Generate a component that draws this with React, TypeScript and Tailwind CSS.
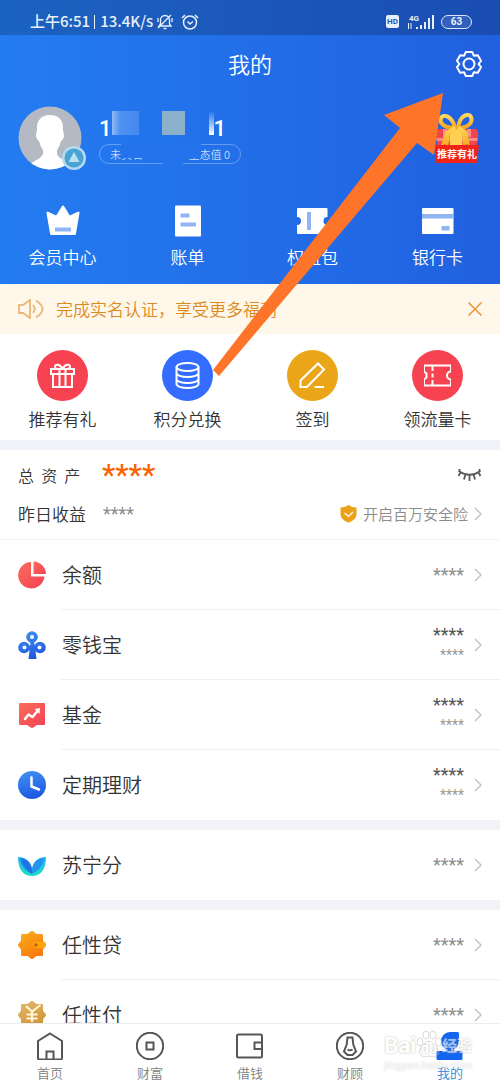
import type { ReactNode } from "react";

const CrownIcon = () => (
  <svg width="34" height="32" viewBox="0 0 34 32">
    <path
      d="M17 0.5c.6 0 1 .4 1.3 1l5 8.2c.4.6 1 .7 1.6.3l7-3.2c1-.4 1.9.2 1.6 1.200L30 28.500c-.2 1-.8 1.500-1.800 1.500H5.800c-1 0-1.600-.5-1.800-1.500L.5 8c-.3-1 .6-1.600 1.600-1.200l7 3.200c.6.4 1.200.3 1.600-.3l5-8.200c.300-.600.700-1 1.300-1z"
      fill="#fff"
    />
    <path d="M9 22.500h16v4H9z" fill="#91b5f3" />
  </svg>
);

const BillIcon = () => (
  <svg width="34" height="32" viewBox="0 0 34 32">
    <rect x="4" y="0.500" width="26" height="31" rx="1" fill="#fff" />
    <path d="M9.500 8.500h9v4h-9zM9.500 17.500H25v4H9.500z" fill="#91b5f3" />
  </svg>
);

const CouponIcon = () => (
  <svg width="34" height="32" viewBox="0 0 34 32">
    <path
      d="M2 3h28.500a1 1 0 0 1 1 1v8a4 4 0 0 0 0 8v8a1 1 0 0 1-1 1H2a1 1 0 0 1-1-1v-8a4 4 0 0 0 0-8V4a1 1 0 0 1 1-1z"
      fill="#fff"
    />
    <path d="M11 7h4v18h-4z" fill="#91b5f3" />
  </svg>
);

const CardIcon = () => (
  <svg width="34" height="32" viewBox="0 0 34 32">
    <rect x="1" y="3" width="31.500" height="26" rx="1" fill="#fff" />
    <path d="M1 9h31.500v4.500H1zM20.500 21h8v4.500h-8z" fill="#91b5f3" />
  </svg>
);

const shortcuts = [
  { label: "会员中心", icon: <CrownIcon /> },
  { label: "账单", icon: <BillIcon /> },
  { label: "权益包", icon: <CouponIcon /> },
  { label: "银行卡", icon: <CardIcon /> },
];

const actions = [
  {
    label: "推荐有礼",
    circle: "bg-[#f74351]",
    icon: (
      <>
        <path d="M2 7h23v5H2zM4 12h19v13H4zM10.500 7v18M16.500 7v18" />
        <path d="M13.500 7C11 2 6.500 1.500 6 4.500c0 1.500 1 2.500 2.500 2.500M13.500 7c2.500-5 7-5.500 7.500-2.500 0 1.500-1 2.500-2.500 2.500" />
      </>
    ),
  },
  {
    label: "积分兑换",
    circle: "bg-[#336cff]",
    icon: (
      <>
        <ellipse cx="13.500" cy="5" rx="11" ry="4" />
        <path d="M2.500 5v17c0 2.200 5 4 11 4s11-1.800 11-4V5M2.500 11c0 2.200 5 4 11 4s11-1.800 11-4M2.500 17c0 2.200 5 4 11 4s11-1.800 11-4" />
      </>
    ),
  },
  {
    label: "签到",
    circle: "bg-[#eba518]",
    icon: <path d="M19 1.500l6 6L8 25H1.500v-6.500zM15.500 25H25" />,
  },
  {
    label: "领流量卡",
    circle: "bg-[#f74351]",
    icon: (
      <path d="M0 3.500h27v6a4 4 0 0 0 0 8v6H0v-6l2.500-2v-4L0 9.500zM8.500 4v5M8.500 11.500v4M8.500 18v5" />
    ),
  },
];

const Gradients = () => (
  <svg width="0" height="0" className="absolute" aria-hidden="true">
    <defs>
      <linearGradient id="red" x1="0" y1="0" x2="1" y2="1">
        <stop offset="0" stopColor="#fa6e5c" />
        <stop offset="1" stopColor="#f63f54" />
      </linearGradient>
      <linearGradient id="blue" gradientUnits="userSpaceOnUse" x1="10" y1="0" x2="18" y2="28">
        <stop offset="0" stopColor="#3f8ff2" />
        <stop offset="1" stopColor="#1c55df" />
      </linearGradient>
      <linearGradient id="orange" x1="0" y1="0" x2="0.600" y2="1">
        <stop offset="0" stopColor="#fbb01c" />
        <stop offset="1" stopColor="#f9780d" />
      </linearGradient>
      <linearGradient id="gold" x1="0" y1="0" x2="0.500" y2="1">
        <stop offset="0" stopColor="#e3b96b" />
        <stop offset="1" stopColor="#cf9437" />
      </linearGradient>
      <linearGradient id="leaf" x1="0" y1="0" x2="0" y2="1">
        <stop offset="0" stopColor="#21b4f5" />
        <stop offset="1" stopColor="#1ee0bd" />
      </linearGradient>
      <linearGradient id="ribbon" x1="0" y1="0" x2="0" y2="1">
        <stop offset="0" stopColor="#ffd95e" />
        <stop offset="1" stopColor="#f7a51f" />
      </linearGradient>
    </defs>
  </svg>
);

const BADGE =
  "M14 0c1.500 0 3 2.300 4.500 3H23.500c1 0 1.500.5 1.500 1.500V9.500c.700 1.500 3 3 3 4.500s-2.300 3-3 4.500v5c0 1-.5 1.500-1.500 1.500H18.500c-1.500.700-3 3-4.500 3s-3-2.300-4.500-3H4.500C3.500 25 3 24.500 3 23.500V18.500C2.300 17 0 15.500 0 14s2.300-3 3-4.500v-5C3 3.500 3.500 3 4.500 3h5C11 2.300 12.500 0 14 0z";

type Asset = { name: string; icon: ReactNode; sub?: boolean };

const groups: Asset[][] = [
  [
    {
      name: "余额",
      icon: (
        <>
          <path d="M13 1v14.500h13.500A13.200 13.200 0 1 1 13 1z" fill="url(#red)" />
          <path d="M15.500.5A13 13 0 0 1 28 13H15.500z" fill="url(#red)" />
        </>
      ),
    },
    {
      name: "零钱宝",
      sub: true,
      icon: (
        <>
          <g fill="url(#blue)">
            <circle cx="14" cy="6" r="5.800" />
            <circle cx="6" cy="16.500" r="5.800" />
            <circle cx="22" cy="16.500" r="5.800" />
            <path d="M12 10h4l.5 4 3 2-2 4 1 8h-8l1-8-2-4 3-2z" />
          </g>
          <circle cx="14" cy="6" r="2" fill="#fff" />
          <circle cx="6.500" cy="16.500" r="2" fill="#fff" />
          <circle cx="21.500" cy="16.500" r="2" fill="#fff" />
        </>
      ),
    },
    {
      name: "基金",
      sub: true,
      icon: (
        <>
          <path
            d="M2 2h24q1 0 1 1v20q0 1-1 1h-7l-4.300 2.700q-.7.400-1.400 0L9 24H2q-1 0-1-1V3q0-1 1-1z"
            fill="url(#red)"
          />
          <path
            d="M7 18l3.500-4.500 4 2.500 5-6"
            fill="none"
            stroke="#fff"
            strokeWidth="2.500"
            strokeLinecap="round"
            strokeLinejoin="round"
          />
          <path d="M16.500 8l5.500-1-.5 6z" fill="#fff" />
        </>
      ),
    },
    {
      name: "定期理财",
      sub: true,
      icon: (
        <>
          <circle cx="14" cy="14" r="14" fill="url(#blue)" />
          <path
            d="M13.500 6.500V15.500l7.500 3"
            fill="none"
            stroke="#fff"
            strokeWidth="2.500"
            strokeLinecap="round"
            strokeLinejoin="round"
          />
        </>
      ),
    },
  ],
  [
    {
      name: "苏宁分",
      icon: (
        <>
          <path d="M14 25C5 25 0 18 0 6c7 0 13 4 14 13 1-9 7-13 14-13 0 12-5 19-14 19z" fill="url(#leaf)" />
          <path d="M14 23C8 20 3 15 2 7c7 0 12 5 12 13z" fill="#1b86e8" />
          <path d="M14 23C20 20 25 15 26 7c-7 0-12 5-12 13z" fill="#2392f0" />
          <path d="M14 23C9 19 5 14 4 8c6 1 10 6 10 12z" fill="#2270e6" />
        </>
      ),
    },
  ],
  [
    {
      name: "任性贷",
      icon: (
        <>
          <path d={BADGE} fill="url(#orange)" />
          <path d="M17.500 11H27l1 3-2 3h-8.500a3 3 0 0 1 0-6z" fill="#fba70f" />
          <circle cx="18" cy="14" r="1.800" fill="#d9570a" />
        </>
      ),
    },
    {
      name: "任性付",
      icon: (
        <>
          <path d={BADGE} fill="url(#gold)" />
          <path
            d="M8 5l6 5.500L22.500 4M14 11v10M8.500 13.500h11M8.500 17.500h11"
            fill="none"
            stroke="#fff6d8"
            strokeWidth="2.200"
          />
        </>
      ),
    },
  ],
];

const tabs = [
  {
    label: "首页",
    icon: <path d="M14 1.500l12 7.500v17q0 1.500-1.500 1.500h-21Q2 27.500 2 26V9zM10.500 27.500v-8h7v8" />,
  },
  {
    label: "财富",
    icon: (
      <>
        <circle cx="14" cy="14" r="13.200" />
        <path d="M10.500 10.500h7v7h-7z" />
      </>
    ),
  },
  {
    label: "借钱",
    icon: (
      <path d="M2.500 2.500h22q1.500 0 1.500 1.500v20q0 1.500-1.500 1.500h-22Q1 25.500 1 24V4q0-1.500 1.500-1.500zM26 10.500h-7.500v6.500H26" />
    ),
  },
  {
    label: "财顾",
    icon: (
      <>
        <circle cx="14" cy="14" r="13.200" />
        <path d="M11.500 5.500h5l.8 7 2.700 7-3.500 3.500h-5L8 19.500l2.700-7zM11.500 17.500q2.500 1.500 5 0" />
      </>
    ),
  },
];

const Chevron = () => (
  <svg width="8" height="14" viewBox="0 0 8 14" fill="none" stroke="#c4c4c4" strokeWidth="1.500">
    <path d="M1 1l6 6-6 6" />
  </svg>
);

const StatusBar = () => (
  <div className="flex h-[35px] items-center justify-between bg-black/20 pt-2 pr-7 pl-[30px] text-[#e8f0fb]">
    <div className="flex items-center gap-1 text-[15px] font-medium">
      <span>上午6:51</span>
      <span className="h-[14px] w-px bg-[#e8f0fb]" />
      <span className="ml-px">13.4K/s</span>
      <svg width="16" height="16" viewBox="0 0 16 16" fill="none" stroke="currentColor" strokeWidth="1.300">
        <path d="M2 12h12l-1.500-2V6a4.500 4.500 0 0 0-9 0v4zM6.500 14.500h3M1 14L14 1M1 4v4M15 4v4" />
      </svg>
      <svg
        className="ml-1"
        width="18"
        height="16"
        viewBox="0 0 18 16"
        fill="none"
        stroke="currentColor"
        strokeWidth="1.500"
      >
        <circle cx="9" cy="8.500" r="6.500" />
        <path d="M6.500 7.500L9 10l3-2.500M1 4l3-3M17 4l-3-3" />
      </svg>
    </div>
    <div className="flex items-center font-[Roboto]">
      <span className="flex h-[13px] w-[13px] items-center justify-center rounded-[2px] bg-[#e8f0fb] text-[8px] font-bold text-[#1d57b8]">
        HD
      </span>
      <svg className="ml-2" width="28" height="16" viewBox="0 0 28 16" fill="currentColor">
        <text x="2" y="6.500" fontSize="8" fontWeight="700">
          4G
        </text>
        <path d="M9 13h2v2H9zM13 11h2v4h-2zM17 8h2v7h-2zM21 4h2v11h-2zM25 1h2v14h-2zM1 9h1v6H1zM3.500 9h1v6h-1z" />
      </svg>
      <span className="ml-[6px] flex h-[14px] w-[31px] items-center justify-center rounded-full border border-[#dbe6f9] bg-white/10 text-[10px] font-bold">
        63
      </span>
    </div>
  </div>
);

const GiftBadge = () => (
  <button className="relative h-[52px] w-[46px]">
    <svg width="46" height="52" viewBox="0 0 46 52">
      <path d="M3 18q0-1 1-1h38q1 0 1 1 2 4 1 8l-2 9H4l-2-9q-1-4 1-8z" fill="#f0454c" />
      <path d="M9 17h4v8H9zM33 17h4v8h-4zM2 26h42l-1 3H3z" fill="#fb8b86" />
      <path d="M16 17h12v16H16z" fill="#ffd052" />
      <path
        d="M21 16C10 16 5 11 7 6c2-4 11-3 14 10zM24 16c11 0 15-6 13-11-2-4-11-3-13 11z"
        fill="none"
        stroke="url(#ribbon)"
        strokeWidth="4"
      />
      <path d="M20 14l-9 6-4 14 4-2 3 3 2-12 6-6zM25 14l8 5 3 15-3-2-4 3-1-12-5-6z" fill="url(#ribbon)" />
      <path d="M0 33h45l-2 17q0 1-2 1H4q-2 0-2-1z" fill="#f22418" />
    </svg>
    <span className="absolute inset-x-0 bottom-[2px] text-center text-[10px] leading-4 font-bold text-white">
      推荐有礼
    </span>
  </button>
);

const Profile = () => (
  <div className="flex items-start pt-[14px] pr-5 pl-[18px]">
    <div className="relative h-16 w-16">
      <svg width="64" height="64" viewBox="0 0 64 64">
        <clipPath id="avatar">
          <circle cx="32" cy="32" r="31.500" />
        </clipPath>
        <g clipPath="url(#avatar)">
          <path d="M0 0h64v64H0z" fill="#b5b9c3" />
          <path
            d="M32 9c9 0 14 6 13 15l1 5q0 4-3 6-1 5-4 9v4c2 7 16 6 18 16H8c2-8 15-10 17-16v-4q-3-4-4-9-3-2-3-6l1-5C18 15 23 9 32 9z"
            fill="#fff"
          />
        </g>
      </svg>
      <svg className="absolute -right-1 bottom-0" width="24" height="24" viewBox="0 0 24 24">
        <circle cx="12" cy="12" r="12" fill="#b3daf0" />
        <circle cx="12" cy="12" r="9.500" fill="#4aa3d2" />
        <path d="M12 6l5.500 10h-11z" fill="#b9e4f4" />
      </svg>
    </div>
    <div className="ml-[17px] w-[142px]">
      <div className="flex h-[38px] pt-[5px] font-[Roboto] text-[22px] leading-6 font-medium text-white">
        <span className="mt-[6px]">1</span>
        <span className="h-6 w-[27px] bg-linear-to-r from-white/50 via-white/20 via-30% to-white/15" />
        <span className="ml-[23px] h-6 w-[23px] bg-[#8ab1c9]" />
        <span className="ml-6 h-6 w-[5px] bg-linear-to-b from-transparent to-white" />
        <span className="mt-[6px]">1</span>
      </div>
      <div className="relative flex h-5 items-center justify-between rounded-full border border-white/30 px-[10px] text-[11px] text-[#c7dbfa]">
        <span>未实名</span>
        <span>生态值 0</span>
        <span className="absolute -top-px left-[21px] h-[14px] w-[80px] bg-[#2472ec]" />
        <span className="absolute -top-px left-[63px] h-5 w-5 bg-[#2472ec]" />
      </div>
    </div>
    <div className="mt-[6px] ml-auto">
      <GiftBadge />
    </div>
  </div>
);

const Header = () => (
  <header className="bg-linear-to-r from-[#247cf1] to-[#2160df]">
    <StatusBar />
    <div className="grid h-[57px] grid-cols-[1fr_auto_1fr] items-center px-4">
      <h1 className="col-start-2 text-[22px] text-white">我的</h1>
      <button className="justify-self-end" aria-label="设置">
        <svg
          width="30"
          height="30"
          viewBox="0 0 30 30"
          fill="none"
          stroke="#fff"
          strokeWidth="2"
          strokeLinejoin="round"
        >
          <path d="M11.800 3h6.400l1.600 3.700 4-.5 3.200 5.600-2.400 3.200 2.400 3.200-3.200 5.600-4-.5-1.600 3.700h-6.400l-1.600-3.700-4 .5L3 18.200 5.400 15 3 11.800l3.200-5.600 4 .5z" />
          <circle cx="15" cy="15" r="5.500" />
        </svg>
      </button>
    </div>
    <Profile />
    <div className="grid grid-cols-4 pt-[35px] pb-[15px]">
      {shortcuts.map((item) => (
        <button key={item.label} className="flex flex-col items-center gap-2 text-[17px] leading-6 text-white">
          {item.icon}
          {item.label}
        </button>
      ))}
    </div>
  </header>
);

const Notice = () => (
  <div className="flex h-[50px] items-center bg-[#fff7e9] px-[18px] text-[17px] text-[#dc8a1e]">
    <svg width="26" height="20" viewBox="0 0 26 20" fill="none" stroke="#edb679" strokeWidth="1.800">
      <path d="M1 6h4l7-5v18l-7-5H1zM15 6q3.500 4 0 8M18 1.500q13 8.500 0 17" />
    </svg>
    <p className="ml-3">完成实名认证，享受更多福利</p>
    <button className="ml-auto" aria-label="关闭">
      <svg width="14" height="14" viewBox="0 0 14 14" fill="none" stroke="#e8953a" strokeWidth="1.500">
        <path d="M.5.5l13 13M13.500.5l-13 13" />
      </svg>
    </button>
  </div>
);

const Actions = () => (
  <div className="grid h-[106px] grid-cols-4 pt-4">
    {actions.map((item) => (
      <button key={item.label} className="flex flex-col items-center gap-[6px] text-[17px] leading-6">
        <span className={`flex h-[51px] w-[51px] items-center justify-center rounded-full ${item.circle}`}>
          <svg width="27" height="27" viewBox="0 0 27 27" fill="none" stroke="#fff" strokeWidth="2">
            {item.icon}
          </svg>
        </span>
        {item.label}
      </button>
    ))}
  </div>
);

const Summary = () => (
  <section className="flex h-[90px] flex-col border-b border-[#f3f3f3] px-[18px] pt-[5px]">
    <div className="flex h-10 items-center">
      <h2 className="w-[84px] text-base">总&nbsp;&nbsp;资&nbsp;&nbsp;产</h2>
      <span className="font-[Roboto] text-[30px] leading-8 font-medium text-[#fb6400]">****</span>
      <button className="ml-auto" aria-label="显示金额">
        <svg width="25" height="14" viewBox="0 0 25 14" fill="none" stroke="#5a5a5a" strokeWidth="1.800">
          <path d="M1.500 3q11 7.500 22 0M4 3.500L1.500 8M8.500 6L7 11.500M12.500 6.500V13M16.500 6l1.500 5.500M21 3.500L23.500 8M2.500 1v3M22.500 1v3" />
        </svg>
      </button>
    </div>
    <div className="flex h-[38px] items-center">
      <h2 className="w-[85px] text-[17px]">昨日收益</h2>
      <span className="font-[Roboto] text-lg font-normal text-[#8c8c8c]">****</span>
      <a href="#insurance" className="ml-auto flex items-center text-[15px] text-[#8c8c8c]">
        <svg className="mr-[6px]" width="17" height="18" viewBox="0 0 17 18">
          <path d="M8.500 0q3.500 2.500 8 2.500v7q0 5-8 8.200-8-3.200-8-8.200v-7q4.500 0 8-2.500z" fill="#eba11a" />
          <path d="M4.500 8l4 3.500 4.500-4.500" fill="none" stroke="#fff" strokeWidth="1.200" />
        </svg>
        <span className="mr-[6px]">开启百万安全险</span>
        <Chevron />
      </a>
    </div>
  </section>
);

const AssetRow = ({ name, icon, sub }: Asset) => (
  <li className="group">
    <a href="#detail" className="flex items-center pl-[18px]">
      <svg width="28" height="28" viewBox="0 0 28 28">
        {icon}
      </svg>
      <div className="ml-[15px] flex h-[70px] flex-1 items-center border-b border-[#f0f0f0] pr-[18px] pl-px group-last:border-0">
        <span className="text-xl">{name}</span>
        <span className="mr-[10px] ml-auto flex flex-col items-end font-[Roboto] font-normal">
          <span className={`text-lg leading-5 ${sub ? "text-[#555]" : "text-[#8c8c8c]"}`}>****</span>
          {sub && <span className="text-sm leading-5 text-[#999]">****</span>}
        </span>
        <Chevron />
      </div>
    </a>
  </li>
);

const Watermark = () => (
  <div className="pointer-events-none absolute top-[6px] right-7 flex flex-col items-end font-[Roboto,'Noto_Sans_CJK_SC',sans-serif] text-white opacity-60 [text-shadow:0_0_2px_#888]">
    <div className="flex h-7 items-end font-bold">
      <span className="text-[22px] leading-6">Bai</span>
      <span className="relative flex w-[26px] justify-center text-sm leading-5">
        <svg className="absolute bottom-0" width="26" height="28" viewBox="0 0 26 28" fill="none" stroke="#c4c4c4">
          <ellipse cx="4" cy="12" rx="3" ry="4" />
          <ellipse cx="10" cy="5" rx="3" ry="4" />
          <ellipse cx="17" cy="5" rx="3" ry="4" />
          <ellipse cx="22.500" cy="12" rx="3" ry="4" />
          <path d="M13 11q3 0 5 4 6 4 4 9-2 4-9 2-7 2-9-2-2-5 4-9 2-4 5-4z" />
        </svg>
        <span className="relative">du</span>
      </span>
      <span className="text-[15px] leading-6">经验</span>
    </div>
    <span className="text-[11px] leading-4">jingyan.baidu.com</span>
  </div>
);

const TabBar = () => (
  <nav className="relative grid h-[61px] shrink-0 grid-cols-5 border-t border-[#ececec] bg-white pt-2 text-[13px] leading-5 text-[#808080]">
    {tabs.map((tab) => (
      <a key={tab.label} href="#tab" className="flex flex-col items-center gap-[3px]">
        <svg width="28" height="28" viewBox="0 0 28 28" fill="none" stroke="#555" strokeWidth="2">
          {tab.icon}
        </svg>
        {tab.label}
      </a>
    ))}
    <a href="#me" className="flex flex-col items-center gap-[3px] text-[#1e88dc]">
      <svg width="28" height="28" viewBox="0 0 28 28" fill="#1466f0">
        <path d="M14 0h7.500Q23 0 23 1.500V9a9 9 0 0 1-5 8v2h7q1.500 0 1.500 1.500v6q0 1.500-1.500 1.500h-23Q.5 28 .5 26.500v-6Q.5 19 2 19h8v-2a9 9 0 0 1-5-8 9 9 0 0 1 9-9z" />
      </svg>
      我的
    </a>
    <Watermark />
  </nav>
);

const App = () => {
  return (
    <div className="relative flex h-screen flex-col overflow-hidden bg-white font-['Noto_Sans_CJK_SC',sans-serif] font-[350] text-[#333]">
      <Gradients />
      <main className="min-h-0 flex-1 overflow-hidden">
        <Header />
        <Notice />
        <Actions />
        <div className="h-[10px] bg-[#f2f3f8]" />
        <Summary />
        {groups.map((rows, i) => (
          <ul key={i} className={i > 0 ? "border-t-[10px] border-[#f2f3f8]" : ""}>
            {rows.map((row) => (
              <AssetRow key={row.name} {...row} />
            ))}
          </ul>
        ))}
      </main>
      <TabBar />
      <svg className="pointer-events-none absolute top-[93px] left-[213px]" width="230" height="283" viewBox="0 0 230 283">
        <path d="M230 0L171 22l16 13L0 277l6 6L204 50l17 12z" fill="#fe7428" />
      </svg>
    </div>
  );
};

export default App;
